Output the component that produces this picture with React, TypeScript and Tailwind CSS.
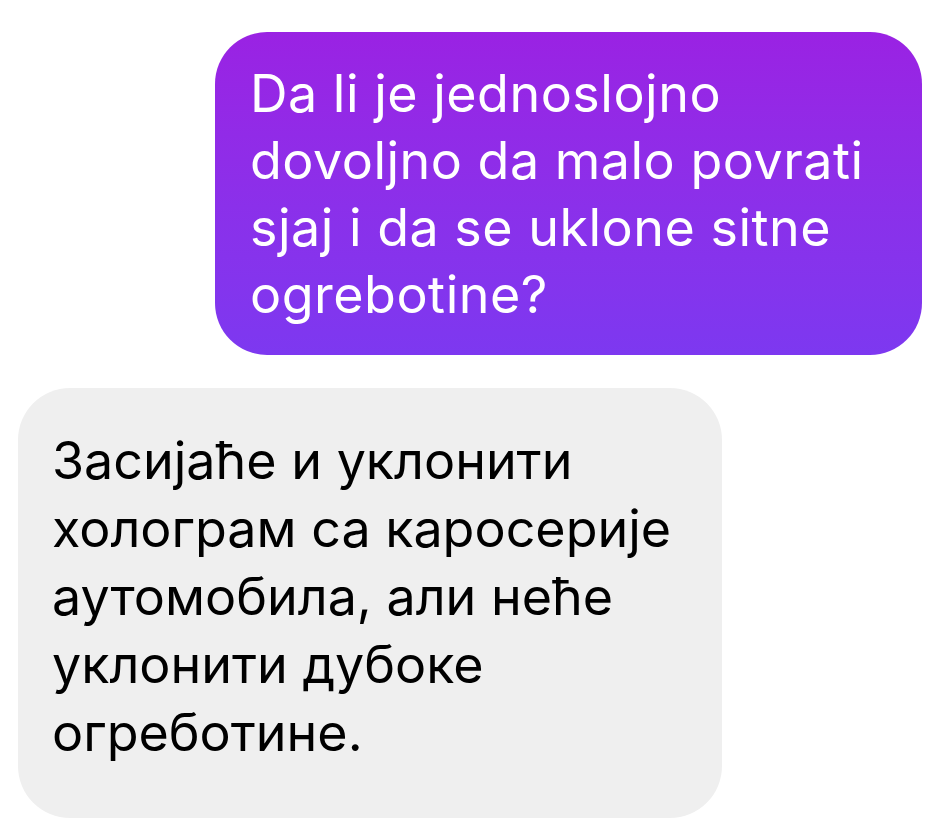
import React from 'react';

const font = { fontFamily: 'Inter, "Noto Sans", sans-serif' };

export default function App() {
  return (
    <div className="w-[944px] h-[839px] bg-white flex flex-col pt-[32px]" style={font}>
      {/* outgoing message */}
      <div className="self-end mr-[22px] w-[707px] rounded-[52px] bg-gradient-to-b from-[#9a22e3] to-[#7d38f0] pl-[35px] pr-[20px] pt-[28px] pb-[27px] text-white text-[52px] leading-[67px] tracking-[0.5px]">
        Da li je jednoslojno dovoljno da malo povrati sjaj i da se uklone sitne ogrebotine?
      </div>

      {/* incoming message */}
      <div className="self-start ml-[18px] mt-[33px] w-[704px] rounded-[52px] bg-[#efefef] pl-[34px] pr-[20px] pt-[39px] pb-[51px] text-black text-[52px] leading-[68px] tracking-[0px]">
        Засијаће и уклонити холограм са каросерије аутомобила, али неће уклонити дубоке огреботине.
      </div>
    </div>
  );
}
